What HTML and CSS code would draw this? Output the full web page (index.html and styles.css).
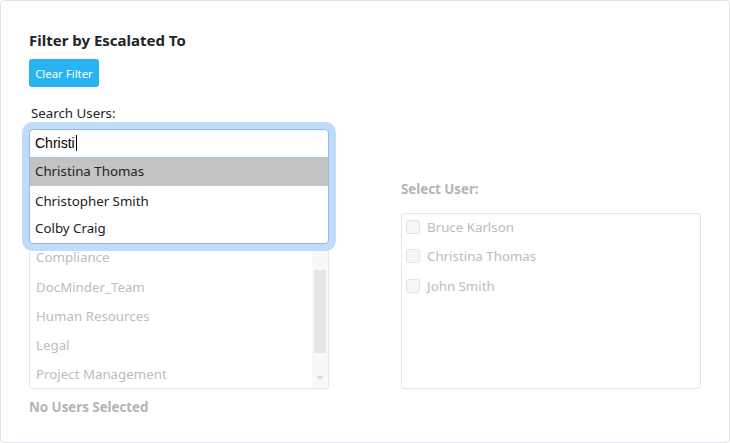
FILE: index.html
```html
<!DOCTYPE html>
<html lang="en">
<head>
    <meta charset="UTF-8">
    <meta name="viewport" content="width=device-width, initial-scale=1.0">
    <title>Filter by Escalated To</title>
    <link rel="stylesheet" href="styles.css">
</head>
<body>

    <div class="card">
        <h3 class="title">Filter by Escalated To</h3>
        <button class="btn-clear">Clear Filter</button>

        <div class="filter-grid">
            <div class="search">
                <label class="search-label">Search Users:</label>
                <div class="combo">
                    <!-- open autocomplete panel, lies over the group list -->
                    <div class="combo-panel">
                        <div class="combo-input">Christi<span class="caret"></span></div>
                        <div class="combo-item active">Christina Thomas</div>
                        <div class="combo-gap"></div>
                        <div class="combo-item">Christopher Smith</div>
                        <div class="combo-item">Colby Craig</div>
                    </div>
                </div>
            </div>
            <div></div>

            <div class="column">
                <div class="muted-label">Select Group:</div>
                <div class="listbox">
                    <div class="list-items">
                        <div class="list-item">Administrators</div>
                        <div class="list-item">Compliance</div>
                        <div class="list-item">DocMinder_Team</div>
                        <div class="list-item">Human Resources</div>
                        <div class="list-item">Legal</div>
                        <div class="list-item">Project Management</div>
                    </div>
                    <div class="scrollbar">
                        <div class="scroll-thumb"></div>
                        <div class="scroll-arrow"></div>
                    </div>
                </div>
                <div class="muted-label selected-note">No Users Selected</div>
            </div>

            <div class="column">
                <div class="muted-label">Select User:</div>
                <div class="userbox">
                    <label class="check-row"><span class="check"></span>Bruce Karlson</label>
                    <label class="check-row"><span class="check"></span>Christina Thomas</label>
                    <label class="check-row"><span class="check"></span>John Smith</label>
                </div>
            </div>
        </div>
    </div>

</body>
</html>
```

FILE: styles.css
```css
body {
    margin: 0;
    font-family: "Noto Sans", "Open Sans", sans-serif;
    font-size: 13.3px;
    color: #212529;
    background-color: #fff;
}

.card {
    width: 730px;
    height: 443px;
    box-sizing: border-box;
    border: 1px solid #dfe3e7;
    border-radius: 4px;
    padding: 30px 28px 0 28px;
}

.title {
    margin: 0;
    font-size: 15px;
    font-weight: bold;
    line-height: 18px;
}

.btn-clear {
    display: block;
    margin-top: 10px;
    width: 70px;
    height: 28px;
    padding: 0;
    font-family: inherit;
    font-size: 11.4px;
    color: #fff;
    background-color: #2ab3f3;
    border: none;
    border-radius: 3px;
}

.filter-grid {
    display: grid;
    grid-template-columns: 300px 300px;
    column-gap: 72px;
}

.search {
    padding-top: 17px;
}

.search-label {
    display: block;
    padding-left: 2px;
    line-height: 18px;
    margin-bottom: 7px;
}

.combo {
    position: relative;
    height: 28px;
}

.combo-panel {
    position: absolute;
    top: 0;
    left: 0;
    right: 0;
    z-index: 2;
    background-color: #fff;
    border: 1px solid #8fb9ee;
    border-radius: 4px;
    box-shadow: 0 0 0 7px #bfdcfb;
}

.combo-input {
    height: 27px;
    line-height: 27px;
    padding-left: 5px;
    font-family: "Liberation Sans", Arial, sans-serif;
    font-size: 14px;
    color: #000;
    border-bottom: 1px solid #a9c6ec;
}

.caret {
    display: inline-block;
    width: 1px;
    height: 16px;
    margin-left: 1px;
    vertical-align: -3px;
    background-color: #000;
}

.combo-item {
    height: 27px;
    line-height: 24px;
    padding-left: 5px;
    color: #222;
}

.combo-item.active {
    height: 28px;
    line-height: 26px;
    background-color: #c3c3c3;
}

.combo-gap {
    height: 3px;
}

.column {
    padding-top: 23px;
}

.muted-label {
    font-weight: bold;
    line-height: 18px;
    color: #b4b4b4;
}

.listbox,
.userbox {
    margin-top: 15px;
    height: 176px;
    box-sizing: border-box;
    border: 1px solid #e6e6e6;
    border-radius: 3px;
    overflow: hidden;
}

.listbox {
    display: flex;
}

.list-items {
    flex: 1;
    padding-left: 6px;
}

.list-item {
    height: 29.3px;
    line-height: 28px;
    color: #bcbcbc;
}

.scrollbar {
    position: relative;
    width: 16px;
    background-color: #f8f8f8;
}

.scroll-thumb {
    margin: 56px 2px 0 2px;
    height: 83px;
    background-color: #e7e7e7;
}

.scroll-arrow {
    position: absolute;
    left: 4px;
    bottom: 8px;
    border-left: 4px solid transparent;
    border-right: 4px solid transparent;
    border-top: 4px solid #dcdcdc;
}

.selected-note {
    margin-top: 9px;
}

.userbox {
    padding-left: 4px;
}

.check-row {
    display: flex;
    align-items: center;
    box-sizing: border-box;
    height: 29.3px;
    padding-bottom: 3px;
    color: #bcbcbc;
}

.check {
    width: 12px;
    height: 12px;
    margin-right: 7px;
    border: 1px solid #e3e3e3;
    border-radius: 3px;
    background-color: #f6f6f6;
}
```
